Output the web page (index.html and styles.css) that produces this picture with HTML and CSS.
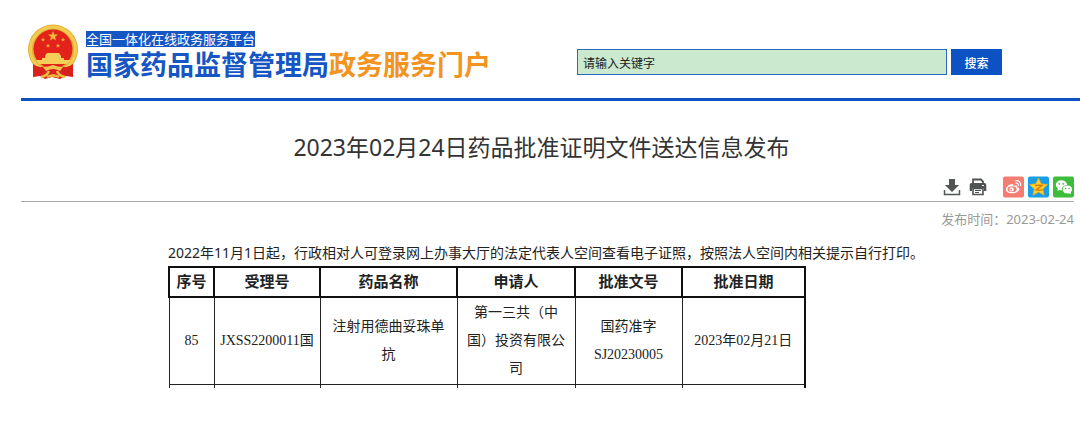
FILE: index.html
```html
<!DOCTYPE html>
<html lang="zh-CN">
<head>
<meta charset="utf-8">
<meta name="viewport" content="width=device-width, initial-scale=1">
<title>国家药品监督管理局政务服务门户</title>
<link rel="stylesheet" href="styles.css">
</head>
<body>
<header class="site-header">
  <div class="brand">
    <svg class="emblem" viewBox="0 0 52 56" aria-hidden="true">
      <path d="M6 36 L6 53 L13 52 L18 55 L25 53 L33 55 L39 52 L46 53 L46 36Z" fill="#d8201c"/>
      <circle cx="26" cy="25.500" r="25" fill="#e3ae33"/>
      <circle cx="26" cy="25.500" r="22.500" fill="none" stroke="#f1cb52" stroke-width="3"/>
      <circle cx="26" cy="25" r="19.500" fill="#e3231b"/>
      <path d="M26 7l1.300 3.600h3.700l-3 2.300 1.100 3.700-3.100-2.200-3.100 2.200 1.100-3.700-3-2.300h3.700z" fill="#f2b83c"/>
      <g fill="#eca93a">
        <path id="star" d="M16 13.500l.7 1.500h1.500l-1.200 1 .5 1.600-1.500-.9-1.500.9.500-1.600-1.200-1h1.500z"/>
        <use href="#star" x="20"/>
        <use href="#star" x="5" y="6"/>
        <use href="#star" x="15" y="6"/>
      </g>
      <path d="M20 29h12l2 3v2h3v2h6q-1 2-3 4H12q-2-2-3-4h6v-2h3v-2z" fill="#f5cf58"/>
      <path d="M6 40 Q12 45 19 42 Q26 39 33 42 Q40 45 46 40 L46 53 L40 50 L34 54 L26 50 L18 54 L12 50 L6 53Z" fill="#d8201c"/>
      <path d="M16 43q5 0 10-2 5 2 10 2l-3 4q-7-4-14 0z" fill="#f0c44b"/>
      <path d="M14 53q6-1 8-6M38 53q-6-1-8-6M20 53q6-3 12 0" fill="none" stroke="#edbd3d" stroke-width="2.500"/>
    </svg>
    <div class="brand-text">
      <span class="platform">全国一体化在线政务服务平台</span>
      <span class="site-name">国家药品监督管理局<span class="portal">政务服务门户</span></span>
    </div>
  </div>
  <form class="search">
    <input class="search-input" type="text" value="请输入关键字" aria-label="请输入关键字">
    <button class="search-button" type="button">搜索</button>
  </form>
</header>
<main class="content">
  <h1 class="title">2023年02月24日药品批准证明文件送达信息发布</h1>
  <div class="toolbar">
    <button class="tool" type="button" aria-label="下载">
      <svg viewBox="0 0 18 18"><path d="M6 1h6v6h4l-7 7-7-7h4z" fill="#505454"/><path d="M1.500 12v4.500h15V12" fill="none" stroke="#505454" stroke-width="1.500"/></svg>
    </button>
    <button class="tool" type="button" aria-label="打印">
      <svg viewBox="0 0 18 18"><path d="M4 5V1.500h8l2 2V5" fill="none" stroke="#505454" stroke-width="1.800"/><path d="M2.500 5h13q1.800 0 1.800 2v6H15v-3H3v3H.7V7q0-2 1.800-2z" fill="#505454"/><path d="M4 10.500h10V16.500H4z" fill="#fff" stroke="#505454" stroke-width="1.600"/><path d="M6 12.500h6M6 14.500h4" stroke="#505454"/><path d="M13 7.500h2" stroke="#fff"/></svg>
    </button>
    <button class="share" type="button" aria-label="微博">
      <svg viewBox="0 0 22 22"><rect width="22" height="22" rx="2" fill="#f47c70"/><path d="M3 13.500c0-3 5.500-6.800 7.500-5.500.8.500.5 1.500.3 2 2-.9 4.800-1 4 1.100 5 1.600 1.200 6.400-5.200 6.400-3.800 0-6.600-1.600-6.600-4z" fill="#fff"/><ellipse cx="9.500" cy="13.300" rx="4.700" ry="3" fill="#f47c70"/><circle cx="9" cy="13.500" r="2.300" fill="#fff"/><circle cx="8.500" cy="13.800" r=".9" fill="#f47c70"/><path d="M13.500 4.500q5-.6 5 5M13.700 7q2.500-.3 2.500 2.300" fill="none" stroke="#fff" stroke-width="1.300" stroke-linecap="round"/></svg>
    </button>
    <button class="share" type="button" aria-label="QQ空间">
      <svg viewBox="0 0 22 22"><rect width="22" height="22" rx="2" fill="#169ee8"/><path d="M11 1.500l2.800 6.200 6.700.7-5 4.600 1.400 6.700-5.900-3.400-5.900 3.400L6.500 13l-5-4.600 6.700-.7z" fill="#fdd02a" stroke="#f2a51b" stroke-width=".7" stroke-linejoin="round"/><path d="M7.500 9.500q3.500-.8 7 0l-6 4.500q3 .7 6.500 0" fill="none" stroke="#dd7616" stroke-width="1.500"/></svg>
    </button>
    <button class="share" type="button" aria-label="微信">
      <svg viewBox="0 0 22 22"><rect width="22" height="22" rx="2" fill="#3ebd3c"/><path d="M4.500 15l.6-2.400C.8 9.500 3.800 4 8.700 4c3.500 0 6 2.300 6.300 5-4 .1-6.500 2.700-5.600 5.400-1 .1-1.700 0-2.500-.2z" fill="#fff"/><ellipse cx="15" cy="13.500" rx="5" ry="4.200" fill="#fff"/><path d="M16 17l2.800 1.500-.4-2.500z" fill="#fff"/><g fill="#3ebd3c"><circle cx="6.500" cy="7.700" r=".9"/><circle cx="10.700" cy="7.700" r=".9"/><circle cx="13.300" cy="12.500" r=".8"/><circle cx="16.800" cy="12.500" r=".8"/></g></svg>
    </button>
  </div>
  <p class="published">发布时间：2023-02-24</p>
  <article class="article">
    <p class="notice">2022年11月1日起，行政相对人可登录网上办事大厅的法定代表人空间查看电子证照，按照法人空间内相关提示自行打印。</p>
    <table class="approvals">
      <colgroup><col class="c-no"><col class="c-accept"><col class="c-drug"><col class="c-applicant"><col class="c-approval"><col class="c-date"></colgroup>
      <thead>
        <tr><th>序号</th><th>受理号</th><th>药品名称</th><th>申请人</th><th>批准文号</th><th>批准日期</th></tr>
      </thead>
      <tbody>
        <tr><td>85</td><td>JXSS2200011国</td><td class="wrap">注射用德曲妥珠单抗</td><td class="wrap">第一三共（中国）投资有限公司</td><td>国药准字SJ20230005</td><td>2023年02月21日</td></tr>
        <tr class="next-row"><td></td><td></td><td></td><td></td><td></td><td></td></tr>
      </tbody>
    </table>
  </article>
</main>
</body>
</html>
```

FILE: styles.css
```css
* { box-sizing: border-box; }

body {
  margin: 0;
  background: #fff;
  color: #222;
  font-family: "Noto Sans", "Noto Sans CJK SC", sans-serif;
}

button { border: 0; padding: 0; background: none; cursor: pointer; }
svg { display: block; width: 100%; height: 100%; }

.site-header {
  display: flex;
  align-items: flex-start;
  gap: 86px;
  margin-left: 21px;
  padding: 24px 78px 17px 6px;
  border-bottom: 3px solid #0d52c2;
}

.brand { display: flex; gap: 7px; flex: none; }
.emblem { width: 52px; height: 56px; }
.brand-text {
  display: flex;
  flex-direction: column;
  align-items: flex-start;
  padding-top: 7px;
  font-family: "Noto Sans CJK SC", sans-serif;
}
.platform {
  background: #1556c4;
  color: #fff;
  font-size: 13px;
  line-height: 16px;
}
.site-name {
  color: #1556c4;
  font-size: 27px;
  font-weight: 700;
  line-height: 34px;
  white-space: nowrap;
}
.portal { color: #f39320; }

.search { display: flex; flex: 1; gap: 4px; padding-top: 25px; }
.search-input {
  flex: 1;
  min-width: 0;
  height: 26px;
  padding: 0 5px;
  border: 1px solid #2c69c4;
  border-radius: 0;
  background: #cae9ce;
  color: #222;
  font: 12px "Noto Sans CJK SC", sans-serif;
}
.search-button {
  width: 51px;
  height: 26px;
  background: #0d52c2;
  color: #fff;
  font: 500 12px "Noto Sans CJK SC", sans-serif;
}

.content { margin-left: 21px; padding-right: 6px; }
.title {
  margin: 0;
  padding: 30px 12px 13px 0;
  color: #333;
  font-size: 23px;
  font-weight: 400;
  line-height: 32px;
  text-align: center;
}

.toolbar {
  display: flex;
  justify-content: flex-end;
  align-items: center;
  gap: 4px;
  padding-bottom: 3px;
  border-bottom: 1px solid #aaa;
}
.tool { width: 18px; height: 18px; margin-right: 4px; }
.tool + .share { margin-left: 8px; }
.share { width: 21px; height: 22px; }

.published {
  margin: 0;
  color: #999;
  font-size: 13px;
  line-height: 34px;
  text-align: right;
}

.article { padding-left: 147px; }
.notice { margin: 0; padding: 7px 0 3px; font-size: 14px; line-height: 20px; }

.approvals {
  width: 637px;
  max-width: 100%;
  border-collapse: collapse;
  table-layout: fixed;
  border-right: 2px solid #111;
  color: #222;
  font-family: "Liberation Serif", "Noto Sans CJK SC", serif;
  font-size: 14px;
  line-height: 28px;
  text-align: center;
}
.c-no { width: 45px; }
.c-accept { width: 106px; }
.c-drug { width: 137px; }
.c-applicant { width: 118px; }
.c-approval { width: 107px; }
.c-date { width: 123px; }
.approvals th { padding: 0; border: 2px solid #111; font-size: 15px; }
.approvals td { padding: 1px 4px; border: 1px solid #222; }
.approvals td.wrap { padding: 1px 8px; }
.approvals td:last-child { border-right: 2px solid #111; }
.approvals .next-row td { height: 3px; padding: 0; border-bottom: 0; }
```
